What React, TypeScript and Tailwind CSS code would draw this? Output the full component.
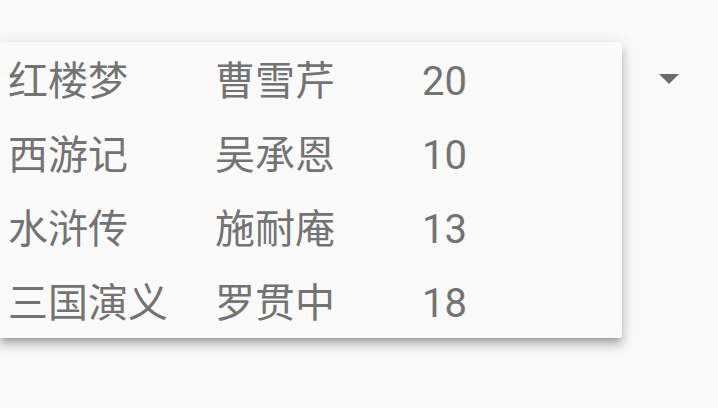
const books = [
  { title: "红楼梦", author: "曹雪芹", count: 20 },
  { title: "西游记", author: "吴承恩", count: 10 },
  { title: "水浒传", author: "施耐庵", count: 13 },
  { title: "三国演义", author: "罗贯中", count: 18 },
];

export default function App() {
  return (
    <div
      className="flex h-[408px] w-[718px] items-start overflow-hidden bg-[#fafafa] text-[#737373]"
      style={{ fontFamily: 'Roboto, "Noto Sans CJK SC", sans-serif' }}
    >
      <div className="mt-[42px] w-[622px] rounded-r-[3px] bg-[#fafafa] pl-[8px] shadow-[0_5px_5px_-3px_rgba(0,0,0,0.2),0_8px_10px_1px_rgba(0,0,0,0.14),0_3px_14px_2px_rgba(0,0,0,0.12)]">
        {books.map((book) => (
          <div key={book.title} className="flex h-[74px] items-center pt-[6px] text-[40px] leading-none">
            <div className="w-[207px]">{book.title}</div>
            <div className="w-[207px]">{book.author}</div>
            <div className="w-[120px]">{book.count}</div>
          </div>
        ))}
      </div>
      <div className="ml-[37px] mt-[74px] h-0 w-0 border-x-[10px] border-t-[10px] border-x-transparent border-t-[#6b6b6b]" />
    </div>
  );
}
